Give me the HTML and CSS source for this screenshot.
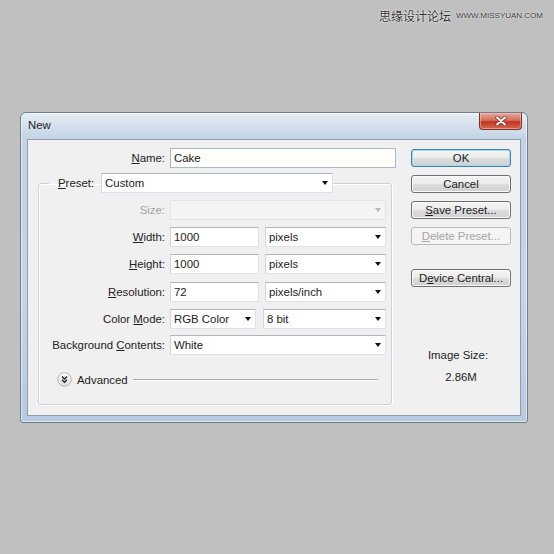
FILE: index.html
```html
<!DOCTYPE html>
<html>
<head>
<meta charset="utf-8">
<title>New</title>
<link rel="stylesheet" href="styles.css">
</head>
<body>
<div class="page">
  <div class="watermark">
    <span class="wm-cn">思缘设计论坛</span>
    <span class="wm-url">WWW.MISSYUAN.COM</span>
  </div>
  <div class="window">
    <div class="titlebar">
      <span class="title">New</span>
      <div class="close">
        <svg width="12" height="10" viewBox="0 0 12 10"><path d="M2 1.5 L10 8.5 M10 1.5 L2 8.5" stroke="#7a2a20" stroke-width="3.4" stroke-linecap="round"/><path d="M2 1.5 L10 8.5 M10 1.5 L2 8.5" stroke="#ffffff" stroke-width="2" stroke-linecap="round"/></svg>
      </div>
    </div>
    <div class="client">
      <div class="left">
        <div class="name-row">
          <span class="lbl"><u>N</u>ame:</span>
          <div class="field name-field"><span class="val">Cake</span></div>
        </div>
        <fieldset class="group">
          <legend class="preset">
            <div class="preset-inner">
              <span class="lbl"><u>P</u>reset:</span>
              <div class="field select preset-select"><span class="val">Custom</span><i class="arrow"></i></div>
            </div>
          </legend>
          <div class="rows">
            <span class="lbl disabled">Size:</span>
            <div class="field select is-disabled"><span class="val"></span><i class="arrow"></i></div>

            <span class="lbl"><u>W</u>idth:</span>
            <div class="pair">
              <div class="field"><span class="val">1000</span></div>
              <div class="field select"><span class="val">pixels</span><i class="arrow"></i></div>
            </div>

            <span class="lbl"><u>H</u>eight:</span>
            <div class="pair">
              <div class="field"><span class="val">1000</span></div>
              <div class="field select"><span class="val">pixels</span><i class="arrow"></i></div>
            </div>

            <span class="lbl res"><u>R</u>esolution:</span>
            <div class="pair res">
              <div class="field"><span class="val">72</span></div>
              <div class="field select"><span class="val">pixels/inch</span><i class="arrow"></i></div>
            </div>

            <span class="lbl mode-l">Color <u>M</u>ode:</span>
            <div class="pair mode">
              <div class="field select"><span class="val">RGB Color</span><i class="arrow"></i></div>
              <div class="field select"><span class="val">8 bit</span><i class="arrow"></i></div>
            </div>

            <span class="lbl">Background <u>C</u>ontents:</span>
            <div class="field select"><span class="val">White</span><i class="arrow"></i></div>
          </div>
          <div class="advanced">
            <svg class="adv-icon" width="15" height="15" viewBox="0 0 15 15">
              <defs><linearGradient id="g" x1="0" y1="0" x2="0" y2="1"><stop offset="0" stop-color="#ffffff"/><stop offset="1" stop-color="#dcdcdc"/></linearGradient></defs>
              <circle cx="7.5" cy="7.5" r="6.8" fill="url(#g)" stroke="#b4b4b4" stroke-width="1"/>
              <path d="M5 4.6 L7.5 7 L10 4.6 M5 7.8 L7.5 10.2 L10 7.8" fill="none" stroke="#222" stroke-width="1.4"/>
            </svg>
            <span class="adv-text">Advanced</span>
            <span class="etched"></span>
          </div>
        </fieldset>
      </div>
      <div class="right">
        <div class="btn default">OK</div>
        <div class="btn">Cancel</div>
        <div class="btn"><span><u>S</u>ave Preset...</span></div>
        <div class="btn is-disabled"><span><u>D</u>elete Preset...</span></div>
        <div class="btn gap"><span>D<u>e</u>vice Central...</span></div>
        <div class="imgsize">
          <div>Image Size:</div>
          <div class="size-val">2.86M</div>
        </div>
      </div>
    </div>
  </div>
</div>
</body>
</html>
```

FILE: styles.css
```css
* { box-sizing: border-box; }

html, body {
  margin: 0;
  padding: 0;
}

body {
  background: #c0c0c0;
  width: 554px;
  height: 554px;
  overflow: hidden;
  font-family: "Liberation Sans", Arial, sans-serif;
  font-size: 11.4px;
  color: #222;
}

.watermark {
  height: 30px;
  display: flex;
  justify-content: flex-end;
  align-items: center;
  gap: 5px;
  padding-right: 11px;
}

.wm-cn {
  font-family: "Noto Sans CJK SC", sans-serif;
  font-size: 12px;
  color: #2e2e2e;
  text-shadow: 0 0 2px #fff, 0 0 1px #fff;
}

.wm-url {
  font-family: "Liberation Sans", Arial, sans-serif;
  font-size: 8px;
  color: #3a3a3a;
  text-shadow: 0 0 2px #fff;
  padding-top: 1px;
}

.window {
  margin: 82px 0 0 20px;
  width: 508px;
  height: 311px;
  border: 1px solid #6e7c8c;
  border-radius: 6px 6px 3px 3px;
  background: linear-gradient(180deg, #e6edf4 0, #d6e1ed 12px, #c3d3e5 26px, #c3d5e8 60%, #b7cbe0 100%);
  padding: 0 6px 6px;
  box-shadow: inset 0 0 0 1px rgba(255, 255, 255, 0.55);
}

.titlebar {
  height: 26px;
  display: flex;
  justify-content: space-between;
  align-items: flex-start;
}

.title {
  padding: 5px 0 0 1px;
  line-height: 14px;
  color: #1b1b1b;
}

.close {
  width: 43px;
  height: 17px;
  margin-right: -1px;
  border: 1px solid #7d3025;
  border-top: none;
  border-radius: 0 0 4px 4px;
  background: linear-gradient(180deg, #e6a99c 0, #d5705f 45%, #c0341f 55%, #d66a52 100%);
  box-shadow: inset 0 0 0 1px rgba(255, 210, 200, 0.45);
  display: flex;
  align-items: center;
  justify-content: center;
}

.client {
  height: 277px;
  border: 1px solid #8d9db0;
  background: #f0f0f0;
  display: flex;
  padding: 8px 0 0 10px;
}

.left {
  width: 358px;
}

.right {
  width: 100px;
  margin-left: 15px;
  padding-top: 1px;
  display: flex;
  flex-direction: column;
}

.lbl {
  text-align: right;
  white-space: nowrap;
  color: #222;
}

.lbl.disabled {
  color: #a3a3a3;
}

.name-row {
  display: grid;
  grid-template-columns: 127px 226px;
  column-gap: 5px;
  height: 20px;
  align-items: center;
}

.field {
  height: 20px;
  background: #fff;
  border: 1px solid #dde2e8;
  border-top-color: #b0b5bc;
  border-left-color: #d2d7de;
  padding: 0 0 0 3px;
  display: flex;
  align-items: center;
  white-space: nowrap;
}

.name-field {
  border-color: #a9bcc6;
  background: #fdfdfa;
}

.field .val {
  flex: 1;
}

.arrow {
  width: 0;
  height: 0;
  margin-right: 4px;
  border-left: 3.5px solid transparent;
  border-right: 3.5px solid transparent;
  border-top: 4px solid #111;
}

.field.is-disabled {
  background: #f4f4f4;
  border-color: #e2e4e6;
}

.field.is-disabled .arrow {
  border-top-color: #b8b8b8;
}

.group {
  margin: 5px 0 0 0;
  width: 354px;
  min-width: 0;
  border: 1px solid #cdd2d7;
  border-radius: 3px;
  padding: 7px 5px 17px 10px;
  box-shadow: inset 1px 1px 0 #fff, 1px 1px 0 #fff;
}

.preset {
  padding: 0 0 0 9px;
}

.preset-inner {
  display: flex;
  align-items: center;
  gap: 7px;
}

.preset-select {
  width: 232px;
}

.rows {
  display: grid;
  grid-template-columns: 116px 216px;
  grid-template-rows: 20px 20px 20px 20px 20px 20px;
  column-gap: 5px;
  row-gap: 7px;
  align-items: center;
}

.res {
  margin-top: 1px;
}

.mode-l,
.pair.mode {
  margin-top: 2px;
}

.pair {
  display: grid;
  grid-template-columns: 89px 121px;
  column-gap: 6px;
}

.pair.mode {
  grid-template-columns: 86px 123px;
  column-gap: 7px;
}

.advanced {
  display: flex;
  align-items: center;
  height: 15px;
  margin: 17px 8px 0 8px;
  gap: 5px;
}

.adv-icon {
  display: block;
  flex: none;
}

.adv-text {
  color: #222;
}

.etched {
  flex: 1;
  height: 2px;
  border-top: 1px solid #a8a8a8;
  border-bottom: 1px solid #ffffff;
}

.btn {
  height: 18px;
  border: 1px solid #707070;
  border-radius: 3px;
  background: linear-gradient(180deg, #f4f4f4 0, #ececec 48%, #dddddd 52%, #d0d0d0 100%);
  box-shadow: inset 0 0 0 1px #fbfbfb;
  display: flex;
  align-items: center;
  justify-content: center;
  color: #1a1a1a;
  white-space: nowrap;
}

.btn + .btn {
  margin-top: 8px;
}

.btn.default {
  border-color: #3c7fb1;
  box-shadow: inset 0 0 0 1px #9fdcf5;
}

.btn.is-disabled {
  border-color: #b5b9bc;
  background: #f4f4f4;
  box-shadow: none;
  color: #a5a5a5;
}

.btn.gap {
  margin-top: 24px;
}

.imgsize {
  margin-top: 61px;
  padding-right: 6px;
  text-align: center;
  line-height: 14px;
  color: #222;
}

.size-val {
  margin-top: 8px;
  padding-left: 6px;
}
```
